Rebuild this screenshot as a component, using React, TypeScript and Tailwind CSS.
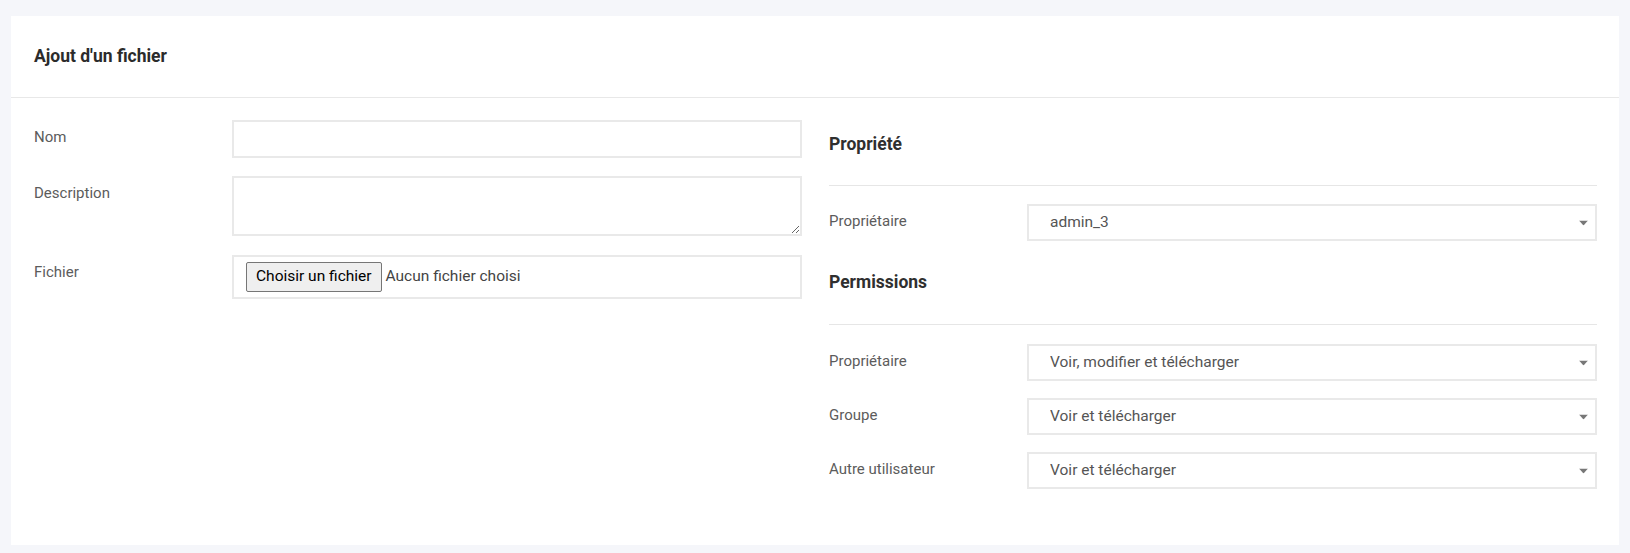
import React from 'react';

// Petite flèche du select
const Caret: React.FC = () => (
  <svg className="pointer-events-none absolute right-[9px] top-1/2 -translate-y-1/2" width="9" height="5" viewBox="0 0 9 5">
    <path d="M0 0 L9 0 L4.5 5 Z" fill="#777" />
  </svg>
);

const SelectField: React.FC<{ value: string }> = ({ value }) => (
  <div className="relative h-[37px] w-full">
    <select
      defaultValue={value}
      className="h-full w-full appearance-none border-2 border-[#e9e9e9] bg-white pl-[21px] pr-8 text-[15.5px] text-[#555] outline-none"
    >
      <option>{value}</option>
    </select>
    <Caret />
  </div>
);

const Row: React.FC<{ label: string; children: React.ReactNode }> = ({ label, children }) => (
  <div className="grid grid-cols-[198px_1fr]">
    <div className="pt-[7px] text-[15px] leading-[20px] text-[#5c5c5c]">{label}</div>
    {children}
  </div>
);

const Section: React.FC<{ title: string; className?: string; lineClass: string }> = ({ title, className, lineClass }) => (
  <div className={className}>
    <h3 className="text-[17.5px] font-bold leading-[24px] text-[#2f2f2f]">{title}</h3>
    <div className={`${lineClass} border-t border-[#e6e6e6]`} />
  </div>
);

const App: React.FC = () => {
  return (
    <div className="min-h-[553px] bg-[#f5f6fa] px-[11px] pt-[16px] pb-[9px]" style={{ fontFamily: 'Roboto, "Noto Sans", sans-serif' }}>
      <div className="bg-white">
        <div className="border-b border-[#e8e8e8] px-[23px] pt-[28px] pb-[29px]">
          <h2 className="text-[17.5px] font-bold leading-[24px] text-[#2b2b2b]">Ajout d'un fichier</h2>
        </div>

        <div className="grid grid-cols-2 gap-[27px] pl-[23px] pr-[22px] pt-[22px] pb-[56px]">
          {/* colonne gauche */}
          <div className="flex flex-col gap-[18px]">
            <Row label="Nom">
              <input type="text" className="h-[38px] w-full border-2 border-[#e9e9e9] bg-white px-3 outline-none" />
            </Row>
            <Row label="Description">
              <textarea className="h-[60px] w-full border-2 border-[#e9e9e9] bg-white px-3 outline-none" />
            </Row>
            <div className="pt-px">
              <Row label="Fichier">
                <div className="flex h-[44px] items-center border-2 border-[#e9e9e9] pl-[12px]">
                  <button className="h-[30px] rounded-[2px] border border-[#767676] bg-[#efefef] px-[9px] text-[15.5px] text-black">
                    Choisir un fichier
                  </button>
                  <span className="ml-[4px] text-[15.5px] text-[#444]">Aucun fichier choisi</span>
                </div>
              </Row>
            </div>
          </div>

          {/* colonne droite */}
          <div className="flex flex-col">
            <Section title="Propriété" className="pt-[12px]" lineClass="mt-[29px]" />
            <div className="mt-[18px]">
              <Row label="Propriétaire">
                <SelectField value="admin_3" />
              </Row>
            </div>
            <Section title="Permissions" className="mt-[29px]" lineClass="mt-[30px]" />
            <div className="mt-[19px] flex flex-col gap-[17px]">
              <Row label="Propriétaire">
                <SelectField value="Voir, modifier et télécharger" />
              </Row>
              <Row label="Groupe">
                <SelectField value="Voir et télécharger" />
              </Row>
              <Row label="Autre utilisateur">
                <SelectField value="Voir et télécharger" />
              </Row>
            </div>
          </div>
        </div>
      </div>
    </div>
  );
};

export default App;
